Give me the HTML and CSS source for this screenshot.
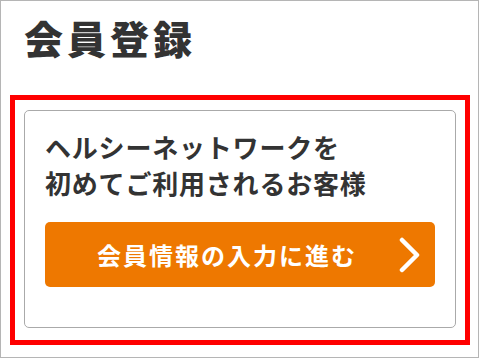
FILE: index.html
```html
<!DOCTYPE html>
<html lang="ja">
<head>
<meta charset="utf-8">
<link rel="stylesheet" href="styles.css">
</head>
<body>
<div class="frame">
  <h1 class="title">会員登録</h1>
  <div class="highlight">
    <div class="card">
      <p class="lead">ヘルシーネットワークを<br>初めてご利用されるお客様</p>
      <a class="btn" href="#">
        <span class="btn-label">会員情報の入力に進む</span>
        <svg class="chev" width="24" height="36" viewBox="0 0 24 36"><path d="M4 3 L19 18 L4 33" fill="none" stroke="#fff" stroke-width="4.5" stroke-linecap="round" stroke-linejoin="round"/></svg>
      </a>
    </div>
  </div>
</div>
</body>
</html>
```
FILE: styles.css
```css
html, body {
  margin: 0;
  padding: 0;
  background: #fff;
}
body {
  font-family: "Noto Sans CJK JP", "Noto Sans", sans-serif;
  color: #333;
}
.frame {
  width: 479px;
  height: 358px;
  box-sizing: border-box;
  border: 1px solid #b5b5b5;
  padding: 0 8px 0 9px;
  display: flex;
  flex-direction: column;
}
.title {
  margin: 0;
  padding: 12px 0 0 14px;
  height: 94px;
  box-sizing: border-box;
  font-size: 39px;
  line-height: 48px;
  font-weight: 900;
  color: #333;
  letter-spacing: 4px;
}
.highlight {
  border: 5px solid #ff0000;
  width: 460px;
  height: 250px;
  box-sizing: border-box;
  padding: 10px 9px 12px 9px;
}
.card {
  border: 1px solid #aaa;
  border-radius: 5px;
  height: 100%;
  box-sizing: border-box;
  padding: 18px 20px 0 20px;
}
.lead {
  margin: 0;
  font-size: 26px;
  line-height: 36px;
  font-weight: 700;
  letter-spacing: 0.8px;
  color: #333;
}
.btn {
  margin-top: 21px;
  height: 65px;
  background: #ee7800;
  border-radius: 5px;
  display: flex;
  align-items: center;
  justify-content: center;
  position: relative;
  text-decoration: none;
  color: #fff;
  padding-right: 26px;
}
.btn-label {
  font-size: 24px;
  font-weight: 700;
  letter-spacing: 2px;
  color: #fff;
}
.chev {
  position: absolute;
  right: 13px;
  top: 15px;
}
```
